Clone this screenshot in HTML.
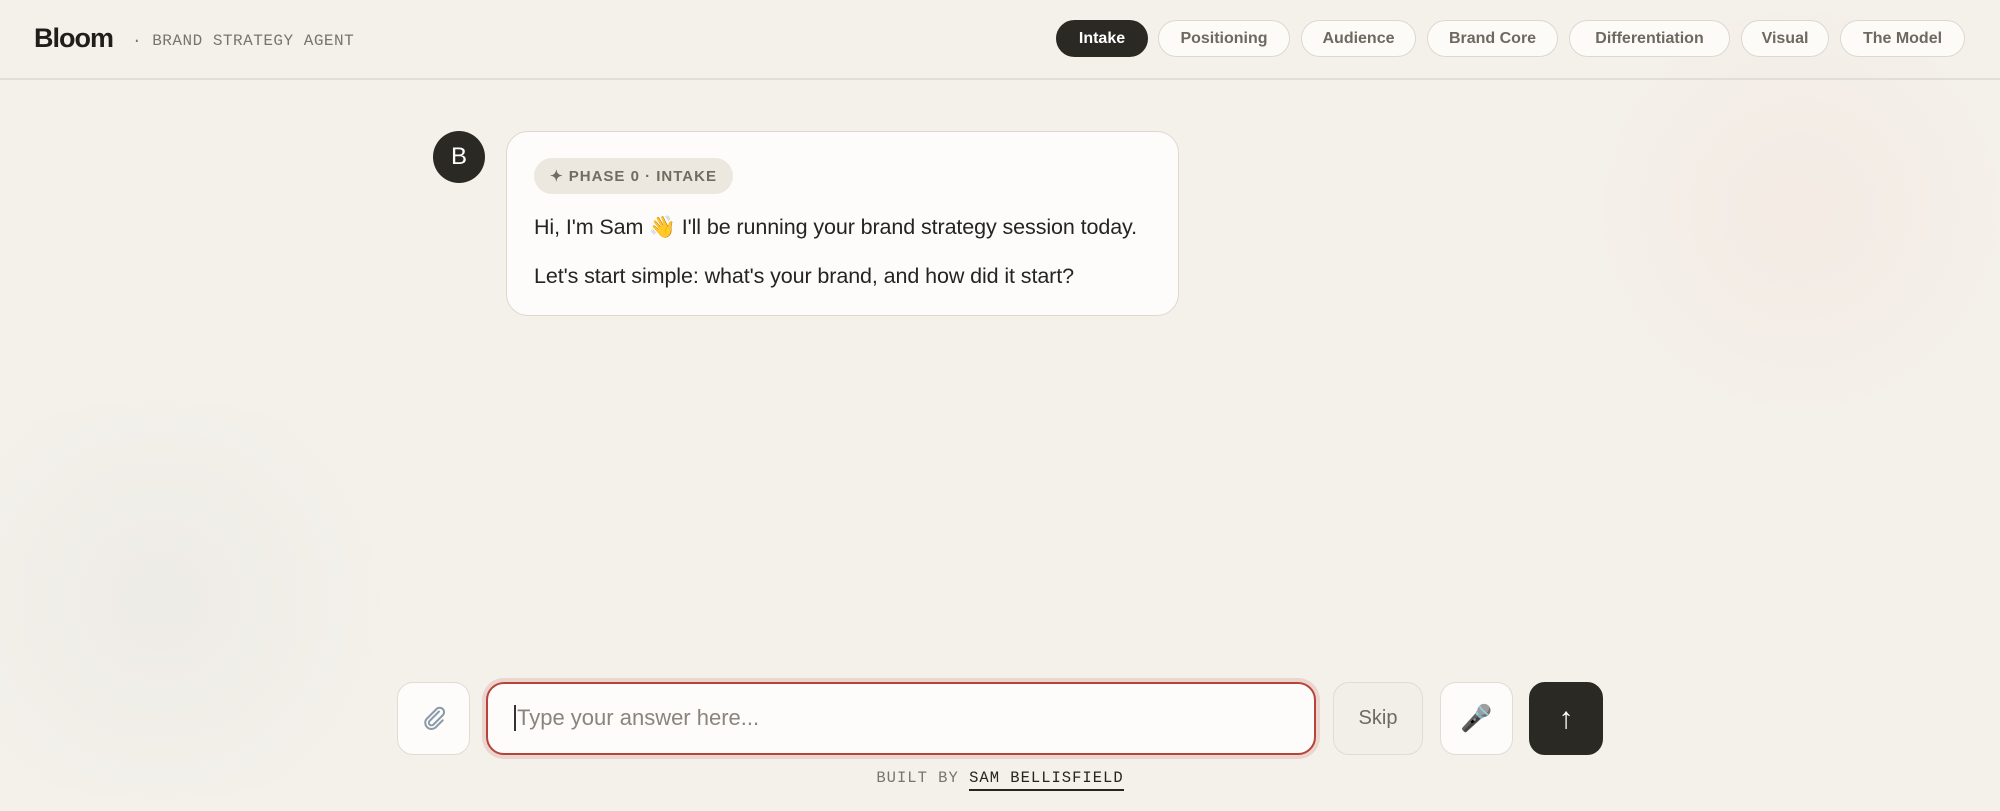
<!DOCTYPE html>
<html><head><meta charset="utf-8"><style>
*{box-sizing:border-box;margin:0;padding:0}
html,body{width:2000px;height:811px;overflow:hidden}
body{background:#f4f1eb;font-family:"Liberation Sans",sans-serif;color:#26241f;position:relative}
.bgwrap{position:absolute;left:0;top:0;width:2000px;height:811px;overflow:hidden}
.bg1{position:absolute;left:1540px;top:-40px;width:520px;height:500px;border-radius:50%;background:radial-gradient(circle,rgba(240,218,208,.28),rgba(244,241,235,0) 70%)}
.bg2{position:absolute;left:-120px;top:400px;width:560px;height:400px;border-radius:50%;background:radial-gradient(circle,rgba(228,227,223,.4),rgba(244,241,235,0) 70%)}
header{position:absolute;left:0;top:0;width:2000px;height:80px;border-bottom:2px solid #e2ded6}
.logo{position:absolute;left:34px;top:23px;font-size:27px;font-weight:bold;letter-spacing:-1px;color:#1f1e1a}
.sub{position:absolute;left:132px;top:32px;font-family:"Liberation Mono",monospace;font-size:16px;color:#7a746a;letter-spacing:.5px}
.pill{position:absolute;top:20px;height:37px;border-radius:19px;border:1.5px solid #ddd8cf;background:#fcfbf8;font-size:16px;font-weight:bold;color:#6e6960;display:flex;align-items:center;justify-content:center}
.pill.on{background:#2a2924;color:#fff;border-color:#2a2924}
.av{position:absolute;left:433px;top:131px;width:52px;height:52px;border-radius:50%;background:#2a2924;color:#fff;font-size:24px;display:flex;align-items:center;justify-content:center}
.bub{position:absolute;left:506px;top:131px;width:673px;height:185px;border:1.5px solid #ddd8cf;border-radius:22px;background:#fdfcfa}
.badge{position:absolute;left:27px;top:26px;width:199px;height:36px;border-radius:18px;background:#ece8df;color:#716b60;font-size:15px;font-weight:bold;letter-spacing:1px;display:flex;align-items:center;justify-content:center}
.l{position:absolute;left:27px;font-size:21.5px;color:#26241f;letter-spacing:-.1px}
.btn{position:absolute;top:682px;height:73px;border-radius:16px;border:1.5px solid #e0dcd3;background:#fdfcfa;display:flex;align-items:center;justify-content:center}
.inp{position:absolute;left:486px;top:682px;width:830px;height:73px;border-radius:18px;border:2px solid #b5443a;background:#fdfcfa;box-shadow:0 0 0 4px rgba(220,150,140,.3)}
.inp span{position:absolute;left:26px;top:21px;font-size:22px;color:#8a857c;border-left:2px solid #333;padding-left:1px}
.foot{position:absolute;left:0;width:2000px;top:769px;text-align:center;font-family:"Liberation Mono",monospace;font-size:15.5px;letter-spacing:1px;color:#7a746a}
.foot u{color:#26241f;text-decoration:none;border-bottom:2px solid #26241f;padding-bottom:2px}
</style></head><body>
<div class="bgwrap"><div class="bg1"></div><div class="bg2"></div></div>
<header>
<div class="logo">Bloom</div>
<div class="sub">· BRAND STRATEGY AGENT</div>
<div class="pill on" style="left:1056px;width:92px">Intake</div>
<div class="pill" style="left:1158px;width:132px">Positioning</div>
<div class="pill" style="left:1301px;width:115px">Audience</div>
<div class="pill" style="left:1427px;width:131px">Brand Core</div>
<div class="pill" style="left:1569px;width:161px">Differentiation</div>
<div class="pill" style="left:1741px;width:88px">Visual</div>
<div class="pill" style="left:1840px;width:125px">The Model</div>
</header>
<div class="av">B</div>
<div class="bub">
<div class="badge">✦ PHASE 0 · INTAKE</div>
<div class="l" style="top:83px">Hi, I'm Sam 👋 I'll be running your brand strategy session today.</div>
<div class="l" style="top:132px">Let's start simple: what's your brand, and how did it start?</div>
</div>
<div class="btn" style="left:397px;width:73px"><svg width="30" height="30" viewBox="0 0 24 24" fill="none" stroke="#8a9aaa" stroke-width="1.6" stroke-linecap="round"><path d="M16 6l-7.5 7.5a2 2 0 0 0 3 3L19 9a3.5 3.5 0 0 0-5-5l-8 8a5 5 0 0 0 7 7l6-6"/></svg></div>
<div class="inp"><span>Type your answer here...</span></div>
<div class="btn" style="left:1333px;width:90px;background:#f2efe8;font-size:20px;color:#6e6960">Skip</div>
<div class="btn" style="left:1440px;width:73px;font-size:26px">🎤</div>
<div class="btn" style="left:1529px;width:74px;background:#2a2924;border-color:#2a2924;color:#fff;font-size:30px">↑</div>
<div class="foot">BUILT BY <u>SAM BELLISFIELD</u></div>
</body></html>
